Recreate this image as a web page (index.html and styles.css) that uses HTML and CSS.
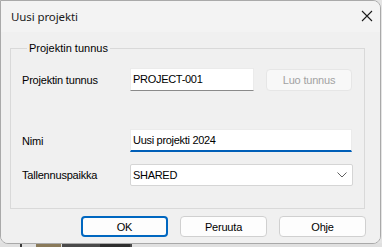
FILE: index.html
```html
<!DOCTYPE html>
<html lang="fi">
<head>
<meta charset="utf-8">
<title>Uusi projekti</title>
<link rel="stylesheet" href="styles.css">
</head>
<body>
<div class="desk">
  <div class="window">
    <div class="titlebar">
      <span class="title">Uusi projekti</span>
      <span class="close" aria-label="Sulje">
        <svg width="12" height="12" viewBox="0 0 12 12"><path d="M1 1 L11 11 M11 1 L1 11" stroke="#1b1b1b" stroke-width="1.1" fill="none"/></svg>
      </span>
    </div>
    <div class="body">
      <fieldset class="group">
        <legend class="legend">Projektin tunnus</legend>
        <div class="row row-id">
          <label class="lbl">Projektin tunnus</label>
          <div class="input">PROJECT-001</div>
          <button class="btn btn-disabled" disabled>Luo tunnus</button>
        </div>
        <div class="row row-name">
          <label class="lbl">Nimi</label>
          <div class="input input-wide input-focus">Uusi projekti 2024</div>
        </div>
        <div class="row row-place">
          <label class="lbl">Tallennuspaikka</label>
          <div class="select">
            <span>SHARED</span>
            <svg width="10" height="6" viewBox="0 0 10 6"><path d="M0.5 0.5 L5 5 L9.5 0.5" stroke="#606060" stroke-width="1" fill="none"/></svg>
          </div>
        </div>
      </fieldset>
      <div class="actions">
        <button class="btn btn-default">OK</button>
        <button class="btn">Peruuta</button>
        <button class="btn">Ohje</button>
      </div>
    </div>
  </div>
  <div class="strip">
    <span class="s1"></span><span class="s2"></span><span class="s3"></span><span class="s4"></span>
  </div>
</div>
</body>
</html>
```
FILE: styles.css
```css
html, body {
  margin: 0;
  padding: 0;
}
body {
  width: 382px;
  height: 247px;
  overflow: hidden;
  background: #e4e4e4;
  font-family: "Liberation Sans", Arial, sans-serif;
  font-size: 11px;
  color: #000;
}
.desk {
  position: relative;
  width: 382px;
  height: 247px;
}
.window {
  position: relative;
  z-index: 1;
  width: 379px;
  height: 242px;
  background: #f0f0f0;
  border: 1px solid #a9a9a9;
  border-radius: 0 8px 8px 8px;
  overflow: hidden;
  display: flex;
  flex-direction: column;
}
.titlebar {
  height: 31px;
  flex: none;
  background: #f3f3f3;
  display: flex;
  align-items: center;
  justify-content: space-between;
  padding-left: 10px;
}
.title {
  font-family: "Noto Sans", "Open Sans", sans-serif;
  font-size: 11.5px;
  color: #1a1a1a;
  letter-spacing: -0.1px;
}
.close {
  width: 46px;
  height: 31px;
  display: flex;
  align-items: center;
  justify-content: center;
  margin-right: -10px;
  margin-top: -1px;
}
.body {
  flex: 1;
  background: #f0f0f0;
  padding: 9px 0 0 9px;
}
.group {
  margin: 0;
  width: 355px;
  height: 168px;
  box-sizing: border-box;
  border: 1px solid #d9d9d9;
  padding: 13px 0 0 11px;
}
.legend {
  padding: 0 2px;
  margin-left: 5px;
  font-size: 11px;
  color: #000;
  line-height: 14px;
}
.row {
  display: flex;
  align-items: center;
}
.lbl {
  width: 108px;
  flex: none;
  letter-spacing: -0.2px;
}
.row-id {
  height: 23px;
}
.row-name {
  height: 23px;
  margin-top: 38px;
}
.row-place {
  height: 22px;
  margin-top: 12px;
}
.input {
  box-sizing: border-box;
  width: 124px;
  height: 23px;
  background: #fff;
  border: 1px solid #ebebeb;
  border-bottom-color: #8a8a8a;
  padding: 4px 2px 0 2px;
  letter-spacing: -0.3px;
}
.input-wide {
  width: 222px;
}
.input-focus {
  border-bottom: 2px solid #005fb8;
}
.select {
  box-sizing: border-box;
  width: 223px;
  height: 22px;
  background: #fff;
  border: 1px solid #d5d5d5;
  border-radius: 2px;
  display: flex;
  align-items: center;
  justify-content: space-between;
  padding: 0 5px 0 2px;
  letter-spacing: -0.3px;
}
.btn {
  box-sizing: border-box;
  font-family: "Liberation Sans", Arial, sans-serif;
  font-size: 11px;
  color: #000;
  background: #fdfdfd;
  border: 1px solid #d0d0d0;
  border-radius: 4px;
  height: 21px;
  width: 87px;
  padding: 0;
  letter-spacing: -0.2px;
}
.btn-disabled {
  margin-left: 12px;
  width: 86px;
  height: 22px;
  background: #f8f8f8;
  border-color: #e6e6e6;
  color: #a2a2a2;
}
.btn-default {
  border: 2px solid #0067c0;
}
.actions {
  display: flex;
  justify-content: flex-end;
  gap: 12px;
  width: 356px;
  margin-top: 7px;
}
.strip {
  position: absolute;
  left: 0;
  right: 0;
  bottom: 0;
  height: 4px;
  background: #e0e0e0;
}
.strip span {
  position: absolute;
  bottom: 0;
  height: 4px;
}
.s1 { left: 20px; width: 2px; background: #3a3a3a; }
.s2 { left: 36px; width: 25px; background: #8a7a5a; }
.s3 { left: 62px; width: 70px; background: #4a4a4a; }
.s4 { left: 100px; width: 30px; background: #2e2e2e; }
```
